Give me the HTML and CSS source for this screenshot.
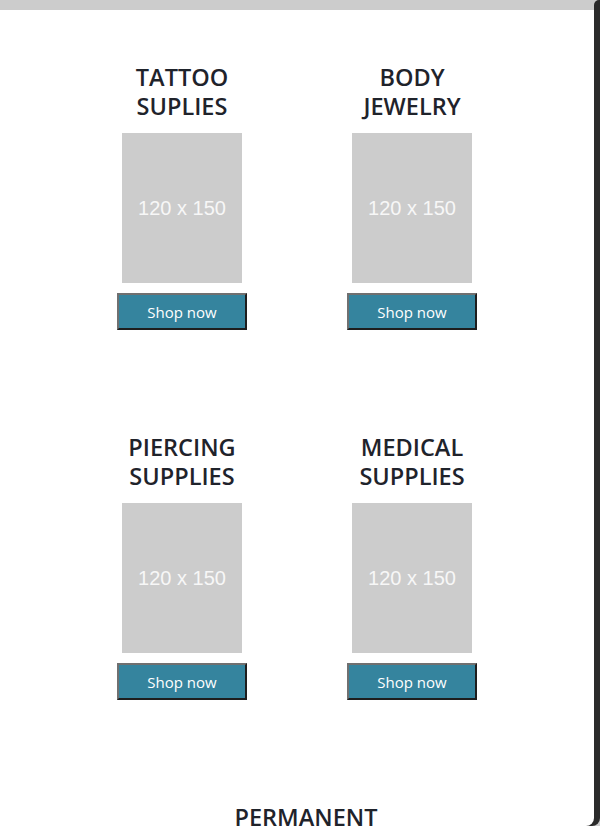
FILE: index.html
```html
<!DOCTYPE html>
<html lang="en">
<head>
<meta charset="utf-8">
<title>Shop</title>
<link rel="stylesheet" href="styles.css">
</head>
<body>
<div class="topbar"><div class="topbar-fill"></div><div class="topbar-edge"></div></div>
<main class="screen">
  <div class="grid">
    <section class="cell">
      <h2 class="title">TATTOO<br>SUPLIES</h2>
      <div class="ph">120 x 150</div>
      <button class="btn">Shop now</button>
    </section>
    <section class="cell">
      <h2 class="title">BODY<br>JEWELRY</h2>
      <div class="ph">120 x 150</div>
      <button class="btn">Shop now</button>
    </section>
    <section class="cell">
      <h2 class="title">PIERCING<br>SUPPLIES</h2>
      <div class="ph">120 x 150</div>
      <button class="btn">Shop now</button>
    </section>
    <section class="cell">
      <h2 class="title">MEDICAL<br>SUPPLIES</h2>
      <div class="ph">120 x 150</div>
      <button class="btn">Shop now</button>
    </section>
    <section class="cell cell-wide">
      <h2 class="title">PERMANENT<br>MAKEUP</h2>
      <div class="ph">120 x 150</div>
      <button class="btn">Shop now</button>
    </section>
  </div>
</main>
</body>
</html>
```
FILE: styles.css
```css
html, body {
  margin: 0;
  padding: 0;
}
body {
  background: #cccccc;
  height: 826px;
  overflow: hidden;
  font-family: "Open Sans", "Noto Sans", sans-serif;
}
.topbar {
  display: flex;
  height: 10px;
}
.topbar-fill {
  flex: 1;
}
.topbar-edge {
  width: 6px;
  background: #2b2b2b;
  border-top-left-radius: 5px;
}
.screen {
  height: 816px;
  margin-right: 6px;
  background: #ffffff;
  border-bottom-right-radius: 8px;
  box-shadow: 6px 0 0 #2b2b2b;
  overflow: hidden;
}
.grid {
  width: 460px;
  margin: 0 auto;
  padding-top: 53px;
  display: grid;
  grid-template-columns: 230px 230px;
  row-gap: 103px;
}
.cell {
  display: flex;
  flex-direction: column;
  align-items: center;
}
.cell-wide {
  grid-column: 1 / span 2;
  padding-left: 18px;
}
.title {
  margin: 0 0 12px;
  font-size: 23.5px;
  line-height: 29px;
  font-weight: 600;
  color: #1f232b;
  text-align: center;
}
.ph {
  width: 120px;
  height: 150px;
  background: #cccccc;
  color: #f7f7f7;
  font-family: "Liberation Sans", Arial, sans-serif;
  font-size: 20px;
  display: flex;
  align-items: center;
  justify-content: center;
}
.btn {
  margin-top: 10px;
  width: 130px;
  height: 37px;
  padding: 0;
  background: #35849e;
  color: #ffffff;
  font-family: "Open Sans", "Noto Sans", sans-serif;
  font-size: 15px;
  border-style: solid;
  border-width: 2px;
  border-color: #707070 #1e1e1e #1e1e1e #707070;
}
```
